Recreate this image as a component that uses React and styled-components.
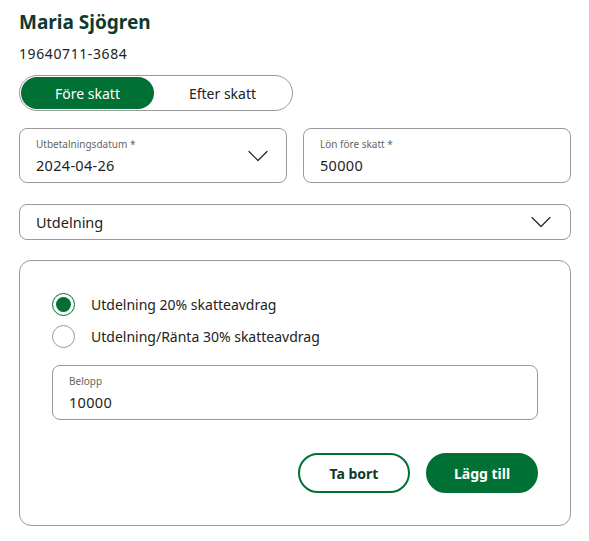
import React from 'react';
import styled, { createGlobalStyle } from 'styled-components';

const GREEN = '#007034';

const GlobalStyle = createGlobalStyle`
    body {
        margin: 0;
        background: #fff;
        font-family: "Noto Sans", "Liberation Sans", sans-serif;
        color: #222;
    }
`

const Page = styled.div`
    padding: 10px 18px 16px 19px;
    width: 552px;
`

const Name = styled.h1`
    margin: 0;
    font-size: 19px;
    font-weight: 700;
    color: #0d3a2e;
    line-height: 24px;
`

const PersonNumber = styled.div`
    margin-top: 10px;
    font-size: 14px;
    letter-spacing: 0.6px;
    color: #222;
`

const Toggle = styled.div`
    margin-top: 12px;
    width: 274px;
    height: 36px;
    box-sizing: border-box;
    border: 1px solid #999;
    border-radius: 18px;
    display: flex;
    align-items: center;
    padding: 1px;
`

const ToggleOption = styled.div`
    flex: ${p => p.$active ? '0 0 133px' : '1'};
    height: 32px;
    border-radius: 16px;
    display: flex;
    align-items: center;
    justify-content: center;
    font-size: 14px;
    background: ${p => p.$active ? GREEN : 'transparent'};
    color: ${p => p.$active ? '#fff' : '#222'};
`

const Row = styled.div`
    margin-top: 17px;
    display: grid;
    grid-template-columns: 1fr 1fr;
    gap: 16px;
`

const Field = styled.div`
    position: relative;
    height: 55px;
    box-sizing: border-box;
    border: 1px solid #9a9a9a;
    border-radius: 8px;
    padding: 8px 16px 0 16px;
    display: flex;
    flex-direction: column;
`

const Label = styled.div`
    font-size: 10px;
    color: #666;
    line-height: 14px;
`

const Value = styled.div`
    margin-top: 4px;
    font-size: 14.5px;
    letter-spacing: 0.3px;
    color: #222;
    line-height: 20px;
`

const ChevronWrap = styled.div`
    position: absolute;
    right: ${p => p.$right || 18}px;
    top: 50%;
    transform: translateY(-50%);
    display: flex;
`

const Select = styled.div`
    position: relative;
    margin-top: 21px;
    height: 36px;
    box-sizing: border-box;
    border: 1px solid #9a9a9a;
    border-radius: 8px;
    padding: 0 16px;
    display: flex;
    align-items: center;
    font-size: 14.5px;
`

const Card = styled.div`
    margin-top: 20px;
    height: 266px;
    box-sizing: border-box;
    border: 1px solid #999;
    border-radius: 12px;
    padding: 31px 32px 0 32px;
`

const RadioList = styled.div`
    display: flex;
    flex-direction: column;
    gap: 8px;
`

const RadioRow = styled.label`
    display: flex;
    align-items: center;
    gap: 16px;
    font-size: 14px;
    color: #222;
    height: 24px;
`

const RadioCircle = styled.span`
    width: 23px;
    height: 23px;
    box-sizing: border-box;
    border-radius: 50%;
    border: 1px solid ${p => p.$checked ? GREEN : '#999'};
    display: flex;
    align-items: center;
    justify-content: center;

    &::after {
        content: '';
        display: ${p => p.$checked ? 'block' : 'none'};
        width: 15px;
        height: 15px;
        border-radius: 50%;
        background: ${GREEN};
    }
`

const AmountField = styled(Field)`
    margin-top: 17px;
`

const Actions = styled.div`
    margin-top: 33px;
    display: flex;
    justify-content: flex-end;
    gap: 16px;
`

const Button = styled.button`
    width: 112px;
    height: 40px;
    box-sizing: border-box;
    border-radius: 20px;
    font-family: inherit;
    font-size: 14px;
    font-weight: 700;
    border: 2px solid ${GREEN};
    background: ${p => p.$primary ? GREEN : '#fff'};
    color: ${p => p.$primary ? '#fff' : '#0d3a2e'};
    cursor: pointer;
`

const Chevron = () => (
    <svg width="20" height="11" viewBox="0 0 20 11" fill="none">
        <path d="M1 1 L10 10 L19 1" stroke="#222" strokeWidth="1.2" strokeLinecap="round" strokeLinejoin="round" />
    </svg>
)

const App = () => {
    return (
        <>
            <GlobalStyle />
            <Page>
                <Name>Maria Sjögren</Name>
                <PersonNumber>19640711-3684</PersonNumber>
                <Toggle>
                    <ToggleOption $active>Före skatt</ToggleOption>
                    <ToggleOption>Efter skatt</ToggleOption>
                </Toggle>
                <Row>
                    <Field>
                        <Label>Utbetalningsdatum *</Label>
                        <Value>2024-04-26</Value>
                        <ChevronWrap $right={18}><Chevron /></ChevronWrap>
                    </Field>
                    <Field>
                        <Label>Lön före skatt *</Label>
                        <Value>50000</Value>
                    </Field>
                </Row>
                <Select>
                    Utdelning
                    <ChevronWrap $right={19}><Chevron /></ChevronWrap>
                </Select>
                <Card>
                    <RadioList>
                        <RadioRow><RadioCircle $checked />Utdelning 20% skatteavdrag</RadioRow>
                        <RadioRow><RadioCircle />Utdelning/Ränta 30% skatteavdrag</RadioRow>
                    </RadioList>
                    <AmountField>
                        <Label>Belopp</Label>
                        <Value>10000</Value>
                    </AmountField>
                    <Actions>
                        <Button>Ta bort</Button>
                        <Button $primary>Lägg till</Button>
                    </Actions>
                </Card>
            </Page>
        </>
    )
}

export default App;
